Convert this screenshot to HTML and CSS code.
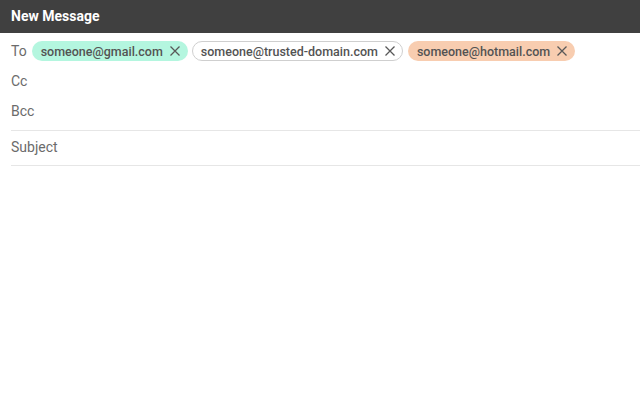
FILE: index.html
```html
<!DOCTYPE html>
<html lang="en">
<head>
    <meta charset="UTF-8">
    <meta name="viewport" content="width=device-width, initial-scale=1.0">
    <title>New Message</title>
    <link rel="stylesheet" href="styles.css">
</head>
<body>
    <div class="header">New Message</div>

    <div class="compose">
        <!-- Recipients -->
        <div class="row to-row">
            <span class="label">To</span>
            <span class="chip chip-gmail">someone@gmail.com
                <svg class="close" viewBox="0 0 12 12"><path d="M1.5 1.5 L10.5 10.5 M10.5 1.5 L1.5 10.5"/></svg>
            </span>
            <span class="chip chip-trusted">someone@trusted-domain.com
                <svg class="close" viewBox="0 0 12 12"><path d="M1.5 1.5 L10.5 10.5 M10.5 1.5 L1.5 10.5"/></svg>
            </span>
            <span class="chip chip-hotmail">someone@hotmail.com
                <svg class="close" viewBox="0 0 12 12"><path d="M1.5 1.5 L10.5 10.5 M10.5 1.5 L1.5 10.5"/></svg>
            </span>
        </div>
        <div class="row"><span class="label">Cc</span></div>
        <div class="row bcc-row"><span class="label">Bcc</span></div>
        <div class="row subject-row"><span class="label">Subject</span></div>
    </div>
</body>
</html>
```

FILE: styles.css
```css
body {
    font-family: Roboto, "Liberation Sans", sans-serif;
    margin: 0;
    padding: 0;
    background-color: white;
}
.header {
    background-color: #404040;
    color: white;
    font-size: 14px;
    font-weight: bold;
    height: 33px;
    padding: 0 11px;
    display: flex;
    align-items: center;
    padding-bottom: 2px;
    box-sizing: border-box;
}
.compose {
    padding-left: 11px;
}
.row {
    display: flex;
    align-items: center;
    height: 30px;
}
.to-row {
    margin-top: 3px;
    gap: 4px;
}
.bcc-row {
    padding-bottom: 4px;
    border-bottom: 1px solid #e6e6e6;
}
.subject-row {
    height: 32px;
    padding-bottom: 2px;
    border-bottom: 1px solid #e6e6e6;
}
.label {
    font-size: 14px;
    color: #6b6b6b;
}
.to-row .label {
    margin-right: 1px;
}
.chip {
    display: inline-flex;
    align-items: center;
    gap: 6px;
    height: 20px;
    box-sizing: border-box;
    padding: 0 7px 0 9px;
    border-radius: 10px;
    font-size: 12.5px;
    font-weight: 500;
    color: #535353;
}
.chip-gmail {
    background-color: #b4f6df;
}
.chip-trusted {
    background-color: white;
    border: 1px solid #cfcfcf;
    padding-left: 8px;
    padding-right: 6px;
}
.chip-hotmail {
    background-color: #f8cdb0;
    margin-left: 1px;
}
.close {
    width: 12px;
    height: 12px;
    stroke: #585858;
    stroke-width: 1.25;
    fill: none;
}
```
